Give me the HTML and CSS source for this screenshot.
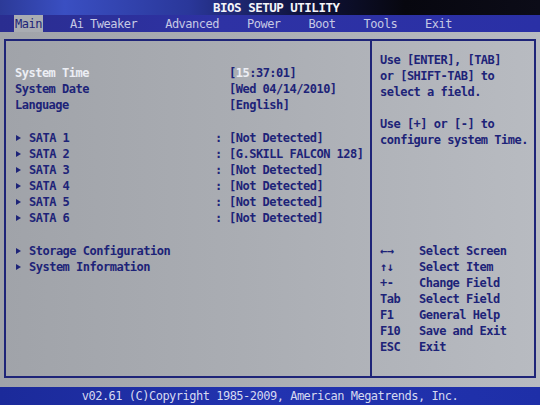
FILE: index.html
```html
<!DOCTYPE html>
<html lang="en">
<head>
  <meta charset="UTF-8">
  <meta name="viewport" content="width=device-width, initial-scale=1">
  <title>BIOS Setup Utility</title>
  <link rel="stylesheet" href="styles.css">
</head>
<body>
  <div class="screen">
    <header class="titlebar">BIOS SETUP UTILITY</header>

    <nav class="menubar">
      <span class="tab active">Main</span>
      <span class="tab">Ai Tweaker</span>
      <span class="tab">Advanced</span>
      <span class="tab">Power</span>
      <span class="tab">Boot</span>
      <span class="tab">Tools</span>
      <span class="tab">Exit</span>
    </nav>

    <main class="body">
      <div class="frame">
        <section class="settings">
          <div class="row selected">
            <span class="label">System Time</span><span></span>
            <span class="value">[<span class="cursor">15</span>:37:01]</span>
          </div>
          <div class="row">
            <span class="label">System Date</span><span></span>
            <span class="value">[Wed 04/14/2010]</span>
          </div>
          <div class="row">
            <span class="label">Language</span><span></span>
            <span class="value">[English]</span>
          </div>

          <div class="group">
            <div class="row"><span class="label sub">SATA 1</span><span class="colon">:</span><span class="value">[Not Detected]</span></div>
            <div class="row"><span class="label sub">SATA 2</span><span class="colon">:</span><span class="value">[G.SKILL FALCON 128]</span></div>
            <div class="row"><span class="label sub">SATA 3</span><span class="colon">:</span><span class="value">[Not Detected]</span></div>
            <div class="row"><span class="label sub">SATA 4</span><span class="colon">:</span><span class="value">[Not Detected]</span></div>
            <div class="row"><span class="label sub">SATA 5</span><span class="colon">:</span><span class="value">[Not Detected]</span></div>
            <div class="row"><span class="label sub">SATA 6</span><span class="colon">:</span><span class="value">[Not Detected]</span></div>
          </div>

          <div class="group">
            <div class="row"><span class="label sub">Storage Configuration</span></div>
            <div class="row"><span class="label sub">System Information</span></div>
          </div>
        </section>

        <aside class="help">
          <div class="hint">
            <p>Use [ENTER], [TAB]<br>or [SHIFT-TAB] to<br>select a field.</p>
            <p>Use [+] or [-] to<br>configure system Time.</p>
          </div>

          <dl class="keys">
            <dt>&larr;&rarr;</dt><dd>Select Screen</dd>
            <dt>&uarr;&darr;</dt><dd>Select Item</dd>
            <dt>+-</dt><dd>Change Field</dd>
            <dt>Tab</dt><dd>Select Field</dd>
            <dt>F1</dt><dd>General Help</dd>
            <dt>F10</dt><dd>Save and Exit</dd>
            <dt>ESC</dt><dd>Exit</dd>
          </dl>
        </aside>
      </div>
    </main>

    <footer class="footer">v02.61 (C)Copyright 1985-2009, American Megatrends, Inc.</footer>
  </div>
</body>
</html>
```

FILE: styles.css
```css
/* AMI-style BIOS setup screen */
body {
  margin: 0;
  background: #000;
  font-family: 'DejaVu Sans Mono', 'Liberation Mono', monospace;
  font-size: 12px;
  letter-spacing: -0.5px;
}

.screen {
  width: 540px;
  height: 405px;
  display: flex;
  flex-direction: column;
  overflow: hidden;
}

/* Title strip */
.titlebar {
  height: 15px;
  line-height: 15px;
  padding-left: 213px;
  background: linear-gradient(90deg, #2c3a98 0%, #3a4fc2 12%, #2a379a 35%, #101440 55%, #07070f 75%, #0c0c18 100%);
  color: #f4f4f8;
  font-weight: bold;
  font-size: 12.5px;
  white-space: nowrap;
}

/* Menu tabs */
.menubar {
  height: 17px;
  display: flex;
  align-items: stretch;
  gap: 26px;
  padding-left: 14px;
  background: linear-gradient(90deg, #2a2d90, #2e32a4 40%, #2a30a6);
  color: #c6c9e4;
}

.tab {
  line-height: 18px;
  padding: 0 1px;
}

.tab.active {
  background: #a9acb2;
  color: #1e2478;
}

/* Gray work area */
.body {
  flex: 1;
  padding: 7px 4px 9px 4px;
  background: linear-gradient(90deg, #a0a3a9 0%, #aaadb3 45%, #b8bbc1 100%);
}

.frame {
  height: 100%;
  box-sizing: border-box;
  border: 2px solid #1e2478;
  display: grid;
  grid-template-columns: 364px 1fr;
  color: #1d2378;
  font-weight: bold;
}

/* Left column: settings list */
.settings {
  padding: 24px 0 0 9px;
}

.row {
  display: grid;
  grid-template-columns: 200px 14px auto;
  height: 16px;
  line-height: 16px;
  white-space: pre;
}

.group {
  margin-top: 17px;
}

.label.sub {
  position: relative;
  padding-left: 14px;
}

/* little right-pointing marker in front of sub menus */
.label.sub::before {
  content: "";
  position: absolute;
  left: 1px;
  top: 5px;
  border-left: 5px solid #1d2378;
  border-top: 3.5px solid transparent;
  border-bottom: 3.5px solid transparent;
}

.selected .label,
.cursor {
  color: #eceef4;
}

/* Right column: help */
.help {
  border-left: 2px solid #1e2478;
  padding: 11px 0 21px 8px;
  display: flex;
  flex-direction: column;
  justify-content: space-between;
  white-space: nowrap;
}

.hint p {
  margin: 0 0 16px 0;
  line-height: 16px;
}

.keys {
  margin: 0;
  display: grid;
  grid-template-columns: 39px 1fr;
  line-height: 16px;
}

.keys dt,
.keys dd {
  margin: 0;
}

/* Copyright strip */
.footer {
  height: 18px;
  line-height: 19px;
  text-align: center;
  background: linear-gradient(90deg, #1b2a9a, #2233b0 50%, #1e2fa8);
  color: #d6d9f0;
  white-space: nowrap;
}
```
